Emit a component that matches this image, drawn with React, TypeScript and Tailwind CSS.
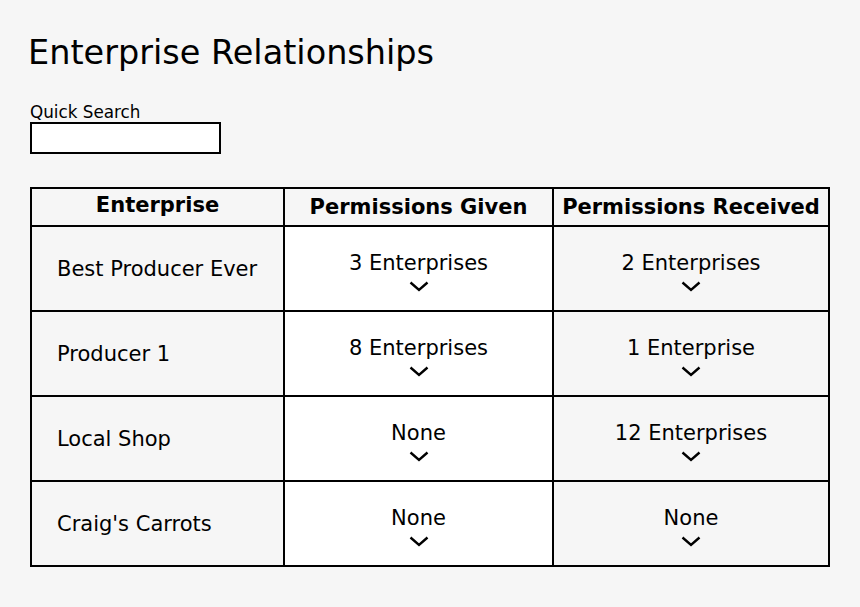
const rows = [
  { name: "Best Producer Ever", given: "3 Enterprises", received: "2 Enterprises" },
  { name: "Producer 1", given: "8 Enterprises", received: "1 Enterprise" },
  { name: "Local Shop", given: "None", received: "12 Enterprises" },
  { name: "Craig's Carrots", given: "None", received: "None" },
]

function Chevron() {
  return (
    <svg width="20" height="11" viewBox="0 0 20 11" className="mx-auto mt-[6px]">
      <path d="M1.5 1.5 L10 9 L18.5 1.5" fill="none" stroke="black" strokeWidth="2.4" />
    </svg>
  )
}

export default function App() {
  return (
    <div
      className="w-[860px] h-[607px] bg-[#f6f6f6] text-black pt-[33px] pl-[28px]"
      style={{ fontFamily: '"DejaVu Sans", sans-serif' }}
    >
      <h1 className="text-[33.5px] leading-[40px]">Enterprise Relationships</h1>

      {/* Quick search */}
      <div className="mt-[30px] ml-[2px]">
        <label className="block text-[16.8px] leading-[19px]">Quick Search</label>
        <input className="block w-[191px] h-[32px] bg-white border-2 border-black outline-none" />
      </div>

      {/* Table */}
      <table className="mt-[33px] ml-[2px] border-collapse">
        <thead>
          <tr className="h-[38px]">
            <th className="w-[253px] border-2 border-black text-[21px] font-bold pb-[2px]">Enterprise</th>
            <th className="w-[269px] border-2 border-black text-[21px] font-bold pt-[2px]">Permissions Given</th>
            <th className="w-[276px] border-2 border-black text-[21px] font-bold pt-[2px]">Permissions Received</th>
          </tr>
        </thead>
        <tbody>
          {rows.map((r) => (
            <tr key={r.name} className="h-[85px]">
              <td className="border-2 border-black pl-[25px] pt-[2px] text-[21px]">{r.name}</td>
              <td className="border-2 border-black bg-white text-center text-[21px] pt-[5px]">
                <div className="leading-[24px]">{r.given}</div>
                <Chevron />
              </td>
              <td className="border-2 border-black text-center text-[21px] pt-[5px]">
                <div className="leading-[24px]">{r.received}</div>
                <Chevron />
              </td>
            </tr>
          ))}
        </tbody>
      </table>
    </div>
  )
}
